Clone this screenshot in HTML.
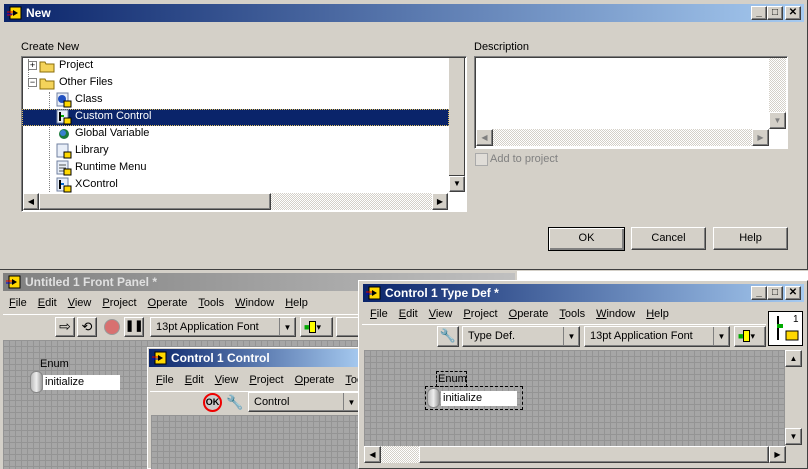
<!DOCTYPE html>
<html><head><meta charset="utf-8"><style>
*{box-sizing:border-box;margin:0;padding:0}
body{width:808px;height:469px;overflow:hidden;background:#d4d0c8;font-family:"Liberation Sans",sans-serif;font-size:11px;color:#000;position:relative}
.a{position:absolute}
.tb{position:absolute;height:18px;color:#fff;font-weight:bold;font-size:12px;line-height:18px;padding-left:22px}
.act{background:linear-gradient(90deg,#0a246a,#a6caf0)}
.ina{background:linear-gradient(90deg,#808080,#c0c0c0);color:#d4d0c8}
.raised{background:#d4d0c8;border:1px solid;border-color:#fff #404040 #404040 #fff;box-shadow:inset -1px -1px #808080}
.sunk{border:1px solid;border-color:#808080 #fff #fff #808080;box-shadow:inset 1px 1px #404040}
.grid{background-color:#a6a6a6;background-image:linear-gradient(#949494 1px,transparent 1px),linear-gradient(90deg,#949494 1px,transparent 1px);background-size:6px 6px}
.btn{position:absolute;text-align:center;line-height:21px;font-size:11px}
.ico{position:absolute;width:16px;height:16px}
.wb{position:absolute;width:16px;height:14px;font-size:10px;line-height:12px;text-align:center;font-weight:bold;color:#000}
.menu span{margin-right:11px}
.chk{background:repeating-conic-gradient(#d4d0c8 0 25%,#fff 0 50%) 0 0/2px 2px}
.ddarr{position:absolute;right:0;top:0;width:16px;height:100%;border-left:1px solid #808080;text-align:center;font-size:8px;line-height:19px}
</style></head><body>

<!-- NEW dialog -->
<div class="a" style="left:0;top:0;width:808px;height:270px;background:#d4d0c8;border-bottom:1px solid #404040;border-right:1px solid #404040"></div>
<div class="tb act" style="left:4px;top:4px;width:800px">New
<svg class="ico" style="left:3px;top:1px" viewBox="0 0 16 16"><rect x="3" y="2" width="11" height="12" fill="#ffd800" stroke="#000"/><path d="M0 7h6M0 10h5" stroke="#d00"/><path d="M0 9h6" stroke="#00c"/><path d="M6 5l5 3-5 3z" fill="#000"/></svg></div>
<div class="wb raised" style="left:751px;top:6px">_</div><div class="wb raised" style="left:767px;top:6px">□</div><div class="wb raised" style="left:785px;top:6px">✕</div>

<div class="a" style="left:21px;top:41px">Create New</div>
<div class="a sunk" style="left:21px;top:56px;width:446px;height:156px;background:#fff"></div>
<!-- tree -->
<div class="a" style="left:28px;top:59px;width:1px;height:30px;border-left:1px dotted #808080"></div>
<div class="a" style="left:49px;top:92px;width:1px;height:100px;border-left:1px dotted #808080"></div>
<div class="a" style="left:28px;top:61px;width:9px;height:9px;border:1px solid #808080;background:#fff;font-size:9px;line-height:7px;text-align:center">+</div>
<div class="a" style="left:28px;top:78px;width:9px;height:9px;border:1px solid #808080;background:#fff;font-size:9px;line-height:6px;text-align:center">−</div>
<svg class="ico" style="left:39px;top:58px" viewBox="0 0 16 16"><path d="M1 4h5l1 2h8v8H1z" fill="#f4d35a" stroke="#8a6d0b"/></svg>
<svg class="ico" style="left:39px;top:75px" viewBox="0 0 16 16"><path d="M1 4h5l1 2h8v8H1z" fill="#f4d35a" stroke="#8a6d0b"/></svg>
<div class="a" style="left:59px;top:59px">Project</div>
<div class="a" style="left:59px;top:76px">Other Files</div>
<div class="a" style="left:22px;top:109px;width:427px;height:17px;background:#0a246a;border:1px dotted #e0c060"></div>
<div class="a" style="left:75px;top:93px">Class</div>
<div class="a" style="left:75px;top:110px;color:#fff">Custom Control</div>
<div class="a" style="left:75px;top:127px">Global Variable</div>
<div class="a" style="left:75px;top:144px">Library</div>
<div class="a" style="left:75px;top:161px">Runtime Menu</div>
<div class="a" style="left:75px;top:178px">XControl</div>
<svg class="ico" style="left:56px;top:92px" viewBox="0 0 16 16"><rect x="1" y="1" width="11" height="13" fill="#e8eef8" stroke="#7080a0"/><circle cx="6" cy="7" r="4" fill="#2050c0"/><rect x="8" y="9" width="7" height="6" fill="#ffd800" stroke="#000"/></svg>
<svg class="ico" style="left:56px;top:109px" viewBox="0 0 16 16"><rect x="1" y="1" width="11" height="13" fill="#e8eef8" stroke="#7080a0"/><path d="M4 3v9" stroke="#000" stroke-width="2"/><rect x="5" y="6" width="3" height="2" fill="#0a0"/><rect x="8" y="9" width="7" height="6" fill="#ffd800" stroke="#000"/></svg>
<svg class="ico" style="left:56px;top:126px" viewBox="0 0 16 16"><circle cx="8" cy="8" r="5" fill="#1a7a3a"/><circle cx="7" cy="7" r="3" fill="#3a80d0"/></svg>
<svg class="ico" style="left:56px;top:143px" viewBox="0 0 16 16"><rect x="1" y="1" width="11" height="13" fill="#e8eef8" stroke="#7080a0"/><rect x="8" y="9" width="7" height="6" fill="#ffd800" stroke="#000"/></svg>
<svg class="ico" style="left:56px;top:160px" viewBox="0 0 16 16"><rect x="1" y="1" width="11" height="13" fill="#e8eef8" stroke="#7080a0"/><path d="M3 5h7M3 8h7M3 11h5" stroke="#555"/><rect x="8" y="9" width="7" height="6" fill="#ffd800" stroke="#000"/></svg>
<svg class="ico" style="left:56px;top:177px" viewBox="0 0 16 16"><rect x="1" y="1" width="11" height="13" fill="#e8eef8" stroke="#7080a0"/><path d="M4 3v9" stroke="#000" stroke-width="2"/><rect x="5" y="6" width="3" height="2" fill="#06c"/><rect x="8" y="9" width="7" height="6" fill="#ffd800" stroke="#000"/></svg>
<!-- tree scrollbars -->
<div class="a" style="left:449px;top:58px;width:16px;height:118px;background:#d4d0c8;border-right:1px solid #404040;border-bottom:1px solid #404040"></div>
<div class="a raised" style="left:449px;top:176px;width:16px;height:16px;font-size:8px;text-align:center;line-height:14px">▼</div>
<div class="a" style="left:23px;top:193px;width:426px;height:17px" ><div class="a raised" style="left:0;top:0;width:16px;height:17px;font-size:8px;text-align:center;line-height:15px">◀</div><div class="a raised" style="left:16px;top:0;width:232px;height:17px"></div><div class="a chk" style="left:248px;top:0;width:161px;height:17px"></div><div class="a raised" style="left:409px;top:0;width:16px;height:17px;font-size:8px;text-align:center;line-height:15px">▶</div></div>

<div class="a" style="left:474px;top:41px">Description</div>
<div class="a sunk" style="left:474px;top:56px;width:314px;height:93px;background:#fff"></div>
<div class="a chk" style="left:769px;top:58px;width:17px;height:54px"></div>
<div class="a raised" style="left:769px;top:112px;width:17px;height:17px;color:#808080;font-size:8px;text-align:center;line-height:15px">▼</div>
<div class="a chk" style="left:476px;top:129px;width:293px;height:17px"></div>
<div class="a raised" style="left:476px;top:129px;width:17px;height:17px;color:#808080;font-size:8px;text-align:center;line-height:15px">◀</div>
<div class="a raised" style="left:752px;top:129px;width:17px;height:17px;color:#808080;font-size:8px;text-align:center;line-height:15px">▶</div>
<div class="a" style="left:475px;top:153px;width:13px;height:13px;border:1px solid #aaa;background:#e0ddd8"></div>
<div class="a" style="left:490px;top:153px;color:#808080">Add to project</div>

<div class="btn raised" style="left:548px;top:227px;width:77px;height:24px;border:1px solid #000;box-shadow:inset 1px 1px #fff,inset -2px -2px #808080">OK</div>
<div class="btn raised" style="left:631px;top:227px;width:75px;height:23px">Cancel</div>
<div class="btn raised" style="left:713px;top:227px;width:75px;height:23px">Help</div>
<div class="a" style="left:517px;top:271px;width:291px;height:9px;background:#fff"></div>

<!-- FRONT PANEL -->
<div class="a" style="left:0;top:271px;width:517px;height:198px;background:#d4d0c8;border-left:3px solid #d4d0c8"></div>
<div class="tb ina" style="left:3px;top:273px;width:512px;color:#e0e0e0">Untitled 1 Front Panel *
<svg class="ico" style="left:3px;top:1px" viewBox="0 0 16 16"><rect x="3" y="2" width="11" height="12" fill="#ffd800" stroke="#000"/><path d="M0 7h6" stroke="#d00"/><path d="M0 9h6" stroke="#00c"/><path d="M6 5l5 3-5 3z" fill="#000"/></svg></div>
<div class="a menu" style="left:9px;top:297px"><span><u>F</u>ile</span><span><u>E</u>dit</span><span><u>V</u>iew</span><span><u>P</u>roject</span><span><u>O</u>perate</span><span><u>T</u>ools</span><span><u>W</u>indow</span><span><u>H</u>elp</span></div>
<div class="a" style="left:3px;top:314px;width:360px;height:1px;background:#fff"></div>
<div class="a raised" style="left:55px;top:317px;width:20px;height:20px;font-size:14px;text-align:center;line-height:17px">⇨</div>
<div class="a raised" style="left:77px;top:317px;width:20px;height:20px;font-size:13px;text-align:center;line-height:17px">⟲</div>
<div class="a" style="left:104px;top:319px;width:16px;height:16px;border-radius:50%;background:#d87070;border:1px solid #999"></div>
<div class="a raised" style="left:124px;top:317px;width:20px;height:20px;font-weight:bold;text-align:center;line-height:17px">❚❚</div>
<div class="a raised" style="left:150px;top:317px;width:146px;height:20px;padding-left:5px;line-height:18px;font-size:11px">13pt Application Font<div class="ddarr">▼</div></div>
<div class="a raised" style="left:300px;top:317px;width:33px;height:20px;font-size:9px;line-height:18px;padding-left:3px"><span style="color:#0a0">■</span><span style="background:#ff0;border:1px solid #000">&nbsp;&nbsp;</span>▾</div>
<div class="a raised" style="left:336px;top:317px;width:30px;height:20px"></div>
<div class="a grid" style="left:3px;top:340px;width:360px;height:129px"></div>
<div class="a" style="left:40px;top:358px">Enum</div>
<div class="a" style="left:30px;top:371px;width:13px;height:22px;border-radius:6px;background:linear-gradient(90deg,#bbb,#eee,#999);border:1px solid #888"></div>
<div class="a" style="left:43px;top:375px;width:77px;height:15px;background:#fff;padding-left:2px;line-height:15px">initialize</div>

<!-- Control 1 Control -->
<div class="a" style="left:147px;top:347px;width:215px;height:122px;background:#d4d0c8;border:1px solid #fff"></div>
<div class="tb act" style="left:149px;top:349px;width:212px">Control 1 Control
<svg class="ico" style="left:3px;top:1px" viewBox="0 0 16 16"><rect x="3" y="2" width="11" height="12" fill="#ffd800" stroke="#000"/><path d="M0 7h6" stroke="#d00"/><path d="M0 9h6" stroke="#00c"/><path d="M6 5l5 3-5 3z" fill="#000"/></svg></div>
<div class="a menu" style="left:156px;top:374px;white-space:nowrap;width:204px;overflow:hidden"><span><u>F</u>ile</span><span><u>E</u>dit</span><span><u>V</u>iew</span><span><u>P</u>roject</span><span><u>O</u>perate</span><span><u>T</u>ools</span></div>
<div class="a" style="left:150px;top:391px;width:211px;height:1px;background:#fff"></div>
<div class="a" style="left:203px;top:393px;width:19px;height:19px;border-radius:50%;border:2px solid #e00;font-size:9px;font-weight:bold;text-align:center;line-height:15px;background:#ccc">OK</div>
<div class="a" style="left:226px;top:394px;color:#999;font-size:14px">🔧</div>
<div class="a raised" style="left:248px;top:392px;width:114px;height:20px;padding-left:5px;line-height:18px">Control<div class="ddarr" style="right:2px">▼</div></div>
<div class="a grid" style="left:151px;top:415px;width:210px;height:54px"></div>

<!-- Type Def window -->
<div class="a" style="left:358px;top:280px;width:450px;height:189px;background:#d4d0c8;border:1px solid;border-color:#fff #404040 #404040 #fff"></div>
<div class="tb act" style="left:363px;top:284px;width:441px">Control 1 Type Def *
<svg class="ico" style="left:3px;top:1px" viewBox="0 0 16 16"><rect x="3" y="2" width="11" height="12" fill="#ffd800" stroke="#000"/><path d="M0 7h6" stroke="#d00"/><path d="M0 9h6" stroke="#00c"/><path d="M6 5l5 3-5 3z" fill="#000"/></svg></div>
<div class="wb raised" style="left:751px;top:286px">_</div><div class="wb raised" style="left:767px;top:286px">□</div><div class="wb raised" style="left:785px;top:286px">✕</div>
<div class="a menu" style="left:370px;top:308px"><span><u>F</u>ile</span><span><u>E</u>dit</span><span><u>V</u>iew</span><span><u>P</u>roject</span><span><u>O</u>perate</span><span><u>T</u>ools</span><span><u>W</u>indow</span><span><u>H</u>elp</span></div>
<div class="a" style="left:362px;top:324px;width:404px;height:1px;background:#fff"></div>
<div class="a" style="left:768px;top:311px;width:35px;height:35px;background:#fff;border:1px solid #000"><svg width="33" height="33" viewBox="0 0 33 33"><path d="M9 4v24" stroke="#000" stroke-width="2"/><rect x="8" y="12" width="6" height="4" fill="#0a0"/><text x="24" y="10" font-size="10" font-family="Liberation Sans">1</text><rect x="17" y="19" width="12" height="9" fill="#ffd800" stroke="#000"/></svg></div>
<div class="a raised" style="left:437px;top:326px;width:22px;height:21px;text-align:center;font-size:13px;line-height:18px;color:#333">🔧</div>
<div class="a raised" style="left:462px;top:326px;width:118px;height:21px;padding-left:5px;line-height:19px">Type Def.<div class="ddarr">▼</div></div>
<div class="a raised" style="left:584px;top:326px;width:146px;height:21px;padding-left:5px;line-height:19px">13pt Application Font<div class="ddarr">▼</div></div>
<div class="a raised" style="left:734px;top:326px;width:32px;height:21px;font-size:9px;line-height:19px;padding-left:3px"><span style="color:#0a0">■</span><span style="background:#ff0;border:1px solid #000">&nbsp;&nbsp;</span>▾</div>
<div class="a grid" style="left:364px;top:350px;width:421px;height:96px"></div>
<div class="a" style="left:785px;top:350px;width:17px;height:96px;background:#d4d0c8"></div>
<div class="a raised" style="left:785px;top:350px;width:17px;height:17px;font-size:8px;text-align:center;line-height:15px">▲</div>
<div class="a raised" style="left:785px;top:428px;width:17px;height:17px;font-size:8px;text-align:center;line-height:15px">▼</div>
<div class="a" style="left:364px;top:446px;width:421px;height:17px;background:#d4d0c8"></div>
<div class="a raised" style="left:364px;top:446px;width:17px;height:17px;font-size:8px;text-align:center;line-height:15px">◀</div>
<div class="a chk" style="left:381px;top:446px;width:38px;height:17px"></div>
<div class="a raised" style="left:419px;top:446px;width:350px;height:17px"></div>
<div class="a raised" style="left:769px;top:446px;width:17px;height:17px;font-size:8px;text-align:center;line-height:15px">▶</div>
<div class="a" style="left:436px;top:371px;width:31px;height:16px;border:1px dashed #000;line-height:14px;padding-left:1px">Enum</div>
<div class="a" style="left:425px;top:386px;width:98px;height:24px;border:1px dashed #000"></div>
<div class="a" style="left:427px;top:388px;width:13px;height:20px;border-radius:6px;background:linear-gradient(90deg,#bbb,#eee,#999);border:1px solid #888"></div>
<div class="a" style="left:441px;top:391px;width:76px;height:15px;background:#fff;padding-left:2px;line-height:15px">initialize</div>
</body></html>
